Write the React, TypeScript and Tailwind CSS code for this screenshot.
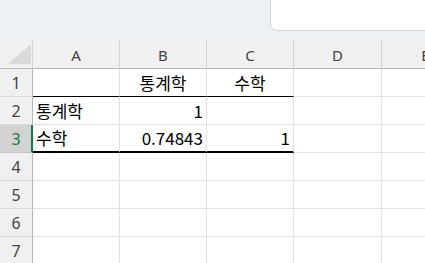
const cols = ["A", "B", "C", "D", "E"];
const colW = ["w-[87px]", "w-[87px]", "w-[87px]", "w-[88px]", "w-[88px]"];

type Cell = { text?: string; align?: "left" | "center" | "right" };

const rows: Cell[][] = [
  [{}, { text: "통계학", align: "center" }, { text: "수학", align: "center" }, {}, {}],
  [{ text: "통계학", align: "left" }, { text: "1", align: "right" }, {}, {}, {}],
  [{ text: "수학", align: "left" }, { text: "0.74843", align: "right" }, { text: "1", align: "right" }, {}, {}],
  [{}, {}, {}, {}, {}],
  [{}, {}, {}, {}, {}],
  [{}, {}, {}, {}, {}],
  [{}, {}, {}, {}, {}],
];

function bottomBorder(r: number, c: number) {
  if (c <= 2 && r === 0) return "border-b border-b-black";
  if (c <= 2 && r === 2) return "border-b-2 border-b-black";
  return "border-b border-b-[#e1e1e1]";
}

const alignCls = {
  left: "justify-start pl-[3px]",
  center: "justify-center",
  right: "justify-end pr-[3px]",
};

export default function App() {
  return (
    <div className="w-[425px] h-[263px] overflow-hidden bg-white font-['Noto_Sans','Noto_Sans_CJK_KR',sans-serif]">
      {/* top strip with formula box */}
      <div className="h-[40px] bg-[#eef1f3] flex justify-end">
        <div className="w-[155px] h-[32px] -mt-px bg-white border border-[#d3d8dc] rounded-bl-[6px] border-r-0" />
      </div>

      {/* column headers */}
      <div className="flex h-[29px] bg-[#f0f0f0] border-b border-b-[#b9b9b9]">
        <div className="w-[33px] shrink-0 border-r border-r-[#d4d4d4] relative">
          <div className="absolute left-[8px] top-[4px] w-[23px] h-[20px] bg-[#dadada] [clip-path:polygon(100%_0,100%_100%,0_100%)]" />
        </div>
        {cols.map((c, i) => (
          <div
            key={c}
            className={`${colW[i]} shrink-0 flex items-center justify-center text-[15px] text-[#444] border-r border-r-[#d4d4d4] pt-[2px]`}
          >
            {c}
          </div>
        ))}
      </div>

      {rows.map((row, r) => {
        const selected = r === 2;
        return (
          <div key={r} className="flex h-[28px]">
            <div
              className={`w-[33px] shrink-0 flex items-center justify-center text-[16px] ${
                selected
                  ? "bg-[#d2d2d2] text-[#107c41] border-r-2 border-r-[#107c41] border-b border-b-[#c6c6c6] pl-[1px]"
                  : "bg-[#f0f0f0] text-[#444] border-r border-r-[#b9b9b9] border-b border-b-[#d9d9d9]"
              }`}
            >
              {r + 1}
            </div>
            {row.map((cell, c) => (
              <div
                key={c}
                className={`${colW[c]} shrink-0 flex items-center text-[17px] text-black font-['Noto_Sans_CJK_KR',sans-serif] border-r border-r-[#e1e1e1] ${bottomBorder(r, c)} ${
                  alignCls[cell.align ?? "left"]
                }`}
              >
                {cell.text}
              </div>
            ))}
          </div>
        );
      })}
    </div>
  );
}
